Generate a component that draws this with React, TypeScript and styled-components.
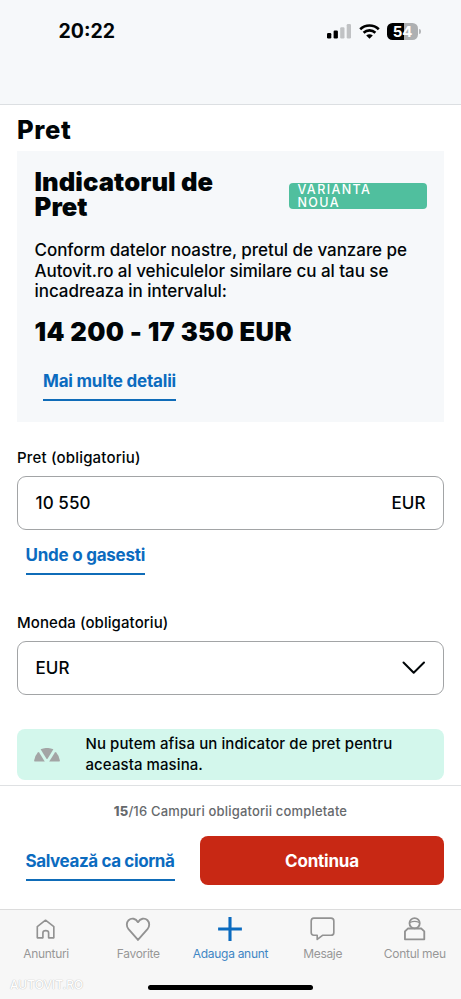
import React from 'react';
import styled, { createGlobalStyle } from 'styled-components';

const Global = createGlobalStyle`
  * { box-sizing: border-box; }
  body { margin: 0; background: #fff; }
`;

const Screen = styled.div`
  width: 461px;
  height: 999px;
  display: flex;
  flex-direction: column;
  overflow: hidden;
  background: #fff;
  color: #000507;
  font-family: Inter, "Liberation Sans", sans-serif;
  font-weight: 500;
  white-space: nowrap;
`;

const StatusBar = styled.header`
  height: 105px;
  flex: none;
  display: flex;
  align-items: flex-start;
  justify-content: space-between;
  padding: 18px 40px 0 58.5px;
  background: #f6f8fa;
  border-bottom: 1px solid #dcdfe2;
`;

const Clock = styled.div`
  font-size: 19.5px;
  font-weight: 650;
  line-height: 27px;
`;

const StatusIcons = styled.div`
  display: flex;
  align-items: center;
  height: 26px;
  gap: 7.5px;
`;

const Battery = styled.div`
  display: flex;
  align-items: center;
  gap: 1px;
  &::after {
    content: '';
    width: 2px;
    height: 5px;
    border-radius: 0 2px 2px 0;
    background: #b4b6b8;
  }
`;

const BatteryCell = styled.div`
  width: 31px;
  height: 17px;
  border-radius: 5.5px;
  background: linear-gradient(90deg, #000 54%, #aeb0b2 54%);
  color: #fff;
  font-size: 15px;
  font-weight: 750;
  line-height: 17px;
  text-align: center;
`;

const Main = styled.main`
  height: 680px;
  flex: none;
  padding: 11px 17px 0;
`;

const Heading = styled.h1`
  margin: 0;
  height: 35px;
  font-size: 25.6px;
  font-weight: 800;
  line-height: 27px;
  letter-spacing: 0.6px;
`;

const Indicator = styled.section`
  height: 271px;
  padding: 17.5px 17px 0 17.5px;
  background: #f6f8fa;
`;

const IndicatorTop = styled.div`
  display: flex;
  justify-content: space-between;
  align-items: center;
`;

const IndicatorTitle = styled.h2`
  margin: 0;
  font-size: 25.6px;
  font-weight: 900;
  line-height: 25.7px;
  letter-spacing: 0.08px;
`;

const Badge = styled.div`
  width: 138px;
  height: 26px;
  margin-top: 4px;
  padding-left: 8.5px;
  border-radius: 4px;
  background: #50bf9e;
  color: #fff;
  font-size: 12.5px;
  line-height: 13px;
  letter-spacing: 1.4px;
`;

const Copy = styled.p`
  margin: 20.5px 0 0;
  font-size: 17px;
  line-height: 20.3px;
  letter-spacing: -0.05px;
`;

const PriceRange = styled.div`
  margin-top: 16.5px;
  font-size: 25.6px;
  font-weight: 900;
  line-height: 27px;
  letter-spacing: 0.36px;
`;

const TextLink = styled.a<{ $spacing: number }>`
  display: block;
  width: max-content;
  height: 29px;
  border-bottom: 2px solid #0f6cb8;
  color: #0b6bbf;
  font-size: 17px;
  font-weight: 700;
  line-height: 19px;
  letter-spacing: ${p => p.$spacing}px;
`;

const DetailsSlot = styled.div`
  padding: 27px 0 0 8.5px;
`;

const HelpSlot = styled.div`
  height: 83px;
  padding: 15.5px 0 0 8.5px;
`;

const FieldLabel = styled.label<{ $spacing: number }>`
  display: block;
  height: 28px;
  font-size: 15px;
  line-height: 20px;
  letter-spacing: ${p => p.$spacing}px;
`;

const Form = styled.div`
  padding-top: 26px;
`;

const Field = styled.div`
  height: 54px;
  display: flex;
  align-items: center;
  justify-content: space-between;
  padding: 0 17.5px;
  border: 1px solid #a2a4a6;
  border-radius: 9px;
  font-size: 17px;
  letter-spacing: 0.08px;
`;

const Notice = styled.div`
  height: 51px;
  margin-top: 34px;
  display: flex;
  align-items: center;
  gap: 25.5px;
  padding-left: 17px;
  border-radius: 8px;
  background: #d3f7ec;
  font-size: 15px;
  line-height: 20.2px;
  letter-spacing: 0.085px;
`;

const Actions = styled.section`
  height: 124px;
  flex: none;
  padding: 15px 17px 0;
  border-top: 1px solid #dfe1e3;
`;

const Progress = styled.div`
  height: 35px;
  text-align: center;
  color: #66696c;
  font-size: 13px;
  line-height: 20px;
  letter-spacing: 0.17px;
  b { font-weight: 800; }
`;

const ActionRow = styled.div`
  display: flex;
  justify-content: space-between;
  padding-left: 8.5px;
`;

const DraftSlot = styled.div`
  padding-top: 15.5px;
`;

const Continue = styled.button`
  width: 244px;
  height: 49px;
  border: 0;
  border-radius: 8px;
  background: #c82814;
  color: #fff;
  font: 700 17px Inter, sans-serif;
  letter-spacing: -0.2px;
`;

const TabBar = styled.nav`
  height: 90px;
  flex: none;
  display: grid;
  grid-template-columns: repeat(5, 92.2px);
  grid-template-rows: 54px 34px;
  border-top: 1px solid #dcdcdc;
  background: #f7f7f7;
`;

const Tab = styled.div<{ $active?: boolean }>`
  display: flex;
  flex-direction: column;
  align-items: center;
  padding-top: 5px;
  color: ${p => (p.$active ? '#3f86c4' : '#979797')};
  font-size: 12px;
  font-weight: 400;
  line-height: 20px;
  letter-spacing: -0.3px;
  svg { display: block; height: 30px; }
`;

const TabFooter = styled.div`
  grid-column: 1 / -1;
  display: grid;
  grid-template-columns: 148px 165px 1fr;
  align-items: center;
`;

const Watermark = styled.div`
  padding: 8px 0 0 10px;
  color: #fff;
  font-size: 12px;
  line-height: 14px;
  text-shadow: 0 0 1px #b8b8b8, 0 0 1px #d0d0d0;
`;

const HomeIndicator = styled.div`
  height: 5px;
  margin-top: 13px;
  border-radius: 3px;
  background: #000;
`;

const Signal = () => (
  <svg width="24" height="16" viewBox="0 0 24 16">
    <rect x="0" y="10" width="4.3" height="5.5" rx="1.2" fill="#000" />
    <rect x="6.6" y="7.5" width="4.3" height="8" rx="1.2" fill="#000" />
    <rect x="13.2" y="4.3" width="4.3" height="11.2" rx="1.2" fill="#c0c2c4" />
    <rect x="19.7" y="1" width="4.3" height="14.5" rx="1.2" fill="#c0c2c4" />
  </svg>
);

const Wifi = () => (
  <svg width="21" height="15" viewBox="0 0 21 15" fill="none" stroke="#000" strokeWidth="2.6">
    <path d="M1.2 5.2C6.4 0.2 14.6 0.2 19.8 5.2" />
    <path d="M4.6 8.7C8 5.6 13 5.6 16.4 8.7" />
    <path d="M7.2 11.4C9.2 9.7 11.8 9.7 13.8 11.4L10.5 14.8Z" fill="#000" stroke="none" />
  </svg>
);

const Chevron = () => (
  <svg width="24" height="14" viewBox="0 0 24 14" fill="none" stroke="#000507" strokeWidth="2" strokeLinecap="round" strokeLinejoin="round">
    <path d="M1.5 1.5L11.7 11.8L22 1.5" />
  </svg>
);

const Gauge = () => (
  <svg width="26" height="14" viewBox="0 0 26 14" fill="#a3a5a5">
    <path d="M6.6 1.2Q13 -1.3 19.4 1.2L13.7 10.4Q13 11.4 12.3 10.4Z" />
    <path d="M5.1 4.4L10.8 13.5H0.8Q0 13.5 0.1 12.5Q0.8 7.6 3.8 4.4Q4.5 3.7 5.1 4.4Z" />
    <path d="M20.9 4.4L15.2 13.5H25.2Q26 13.5 25.9 12.5Q25.2 7.6 22.2 4.4Q21.5 3.7 20.9 4.4Z" />
  </svg>
);

const IconFrame = ({ children }: { children: React.ReactNode }) => (
  <svg width="30" height="30" viewBox="0 0 30 30" fill="none" stroke="#929292" strokeWidth="1.7" strokeLinejoin="round">
    {children}
  </svg>
);

const tabs = [
  { label: 'Anunturi', icon: <path d="M6 12L14.5 5.4L23.1 12V23.6H17.7V18.4Q17.7 16.2 14.7 16.2Q11.8 16.2 11.8 18.4V23.6H6Z" /> },
  { label: 'Favorite', icon: <path d="M15 25.8L5.2 14.7C2.8 11.8 2.9 7.8 5.3 5.4C8.4 2.5 12.7 3.6 15 7.4C17.3 3.6 21.8 2.5 24.8 5.4C27.2 7.8 27.2 11.8 24.8 14.7Z" strokeWidth="1.9" /> },
  { label: 'Adauga anunt', active: true, icon: <path d="M15 2V27M2.7 14.5H27.3" stroke="#0b6bbf" strokeWidth="3.2" /> },
  { label: 'Mesaje', icon: <path d="M5.5 3.3H23.2Q26.2 3.3 26.2 6.3V18Q26.2 21 23.2 21H14.5L9 25.3V21H5.5Q2.8 21 2.8 18V6.3Q2.8 3.3 5.5 3.3Z" /> },
  {
    label: 'Contul meu',
    icon: (
      <>
        <circle cx="14.6" cy="8.6" r="5.3" strokeWidth="1.9" />
        <path d="M9.8 7.8Q14.6 5.6 19.4 7.8" strokeWidth="1.3" />
        <path d="M7.6 14H21.6L24.6 17V25.2H4.6V17Z" strokeWidth="1.9" />
      </>
    ),
  },
];

export default function App() {
  return (
    <Screen>
      <Global />
      <StatusBar>
        <Clock>20:22</Clock>
        <StatusIcons>
          <Signal />
          <Wifi />
          <Battery><BatteryCell>54</BatteryCell></Battery>
        </StatusIcons>
      </StatusBar>
      <Main>
        <Heading>Pret</Heading>
        <Indicator>
          <IndicatorTop>
            <IndicatorTitle>Indicatorul de<br />Pret</IndicatorTitle>
            <Badge>VARIANTA<br />NOUA</Badge>
          </IndicatorTop>
          <Copy>
            Conform datelor noastre, pretul de vanzare pe<br />
            Autovit.ro al vehiculelor similare cu al tau se<br />
            incadreaza in intervalul:
          </Copy>
          <PriceRange>14 200 - 17 350 EUR</PriceRange>
          <DetailsSlot><TextLink $spacing={-0.2}>Mai multe detalii</TextLink></DetailsSlot>
        </Indicator>
        <Form>
          <FieldLabel $spacing={0.18}>Pret (obligatoriu)</FieldLabel>
          <Field><span>10 550</span><span>EUR</span></Field>
          <HelpSlot><TextLink $spacing={-0.24}>Unde o gasesti</TextLink></HelpSlot>
          <FieldLabel $spacing={0.08}>Moneda (obligatoriu)</FieldLabel>
          <Field><span>EUR</span><Chevron /></Field>
          <Notice>
            <Gauge />
            <span>Nu putem afisa un indicator de pret pentru<br />aceasta masina.</span>
          </Notice>
        </Form>
      </Main>
      <Actions>
        <Progress><b>15</b>/16 Campuri obligatorii completate</Progress>
        <ActionRow>
          <DraftSlot><TextLink $spacing={-0.39}>Salvează ca ciornă</TextLink></DraftSlot>
          <Continue>Continua</Continue>
        </ActionRow>
      </Actions>
      <TabBar>
        {tabs.map(t => (
          <Tab key={t.label} $active={t.active}>
            <IconFrame>{t.icon}</IconFrame>
            {t.label}
          </Tab>
        ))}
        <TabFooter>
          <Watermark>AUTOVIT.RO</Watermark>
          <HomeIndicator />
        </TabFooter>
      </TabBar>
    </Screen>
  );
}
